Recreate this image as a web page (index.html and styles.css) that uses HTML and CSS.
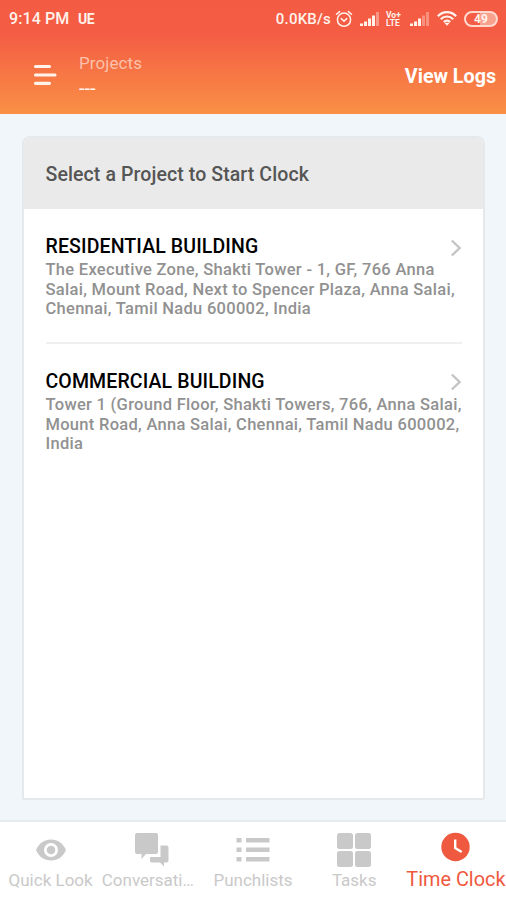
FILE: index.html
```html
<!DOCTYPE html>
<html lang="en">
<head>
    <meta charset="UTF-8">
    <meta name="viewport" content="width=device-width, initial-scale=1.0">
    <title>Time Clock</title>
    <link rel="stylesheet" href="styles.css">
</head>
<body>
    <div class="app">
        <header class="header">
            <!-- Status bar -->
            <div class="status">
                <span class="time">9:14 PM</span>
                <span class="carrier">UE</span>
                <span class="speed">0.0KB/s</span>
                <svg class="alarm" width="18" height="18" viewBox="0 0 18 18" fill="none" stroke="currentColor" stroke-width="1.5" stroke-linecap="round">
                    <circle cx="9" cy="9.7" r="6.6"/>
                    <path d="M1.5 4.3L4.6 1.6M16.5 4.3L13.4 1.6M6.3 8.6L9 11.2L11.7 8.6"/>
                </svg>
                <svg class="signal" width="20" height="14" viewBox="0 0 20 14" fill="currentColor">
                    <path d="M0 11.5h3V14H0zM4 9.5h3V14H4zM8 6.5h3V14H8zM12 3.5h3V14h-3z"/>
                    <path d="M16 0h3v14h-3z" opacity=".4"/>
                </svg>
                <span class="volte"><span>Vo+</span><span>LTE</span></span>
                <svg class="signal" width="20" height="14" viewBox="0 0 20 14" fill="currentColor">
                    <path d="M0 11.5h3V14H0zM4 9.5h3V14H4zM8 6.5h3V14H8z"/>
                    <path d="M12 3.5h3V14h-3zM16 0h3v14h-3z" opacity=".35"/>
                </svg>
                <svg class="wifi" width="20" height="15" viewBox="0 0 20 15" fill="none" stroke="currentColor" stroke-width="2.2">
                    <path d="M.8 5.3C6-.2 14-.2 19.2 5.3M3.8 8.2c3.5-3.6 8.9-3.6 12.4 0M6.8 11c1.8-1.9 4.6-1.9 6.4 0"/>
                    <path d="M7.3 11.8h5.4L10 14.8z" fill="currentColor" stroke="none"/>
                </svg>
                <span class="battery">49</span>
            </div>
            <!-- Toolbar -->
            <div class="toolbar">
                <svg class="menu" width="24" height="22" viewBox="0 0 24 22" stroke="currentColor" stroke-width="3.2" stroke-linecap="round">
                    <path d="M2.5 2.5h14M2.5 11H22M2.5 19.3h14"/>
                </svg>
                <div class="heading">
                    <div class="heading-label">Projects</div>
                    <div class="heading-value">---</div>
                </div>
                <a class="view-logs">View Logs</a>
            </div>
        </header>

        <main class="content">
            <section class="card">
                <h2 class="card-title">Select a Project to Start Clock</h2>
                <div class="project">
                    <div class="project-top">
                        <h3>RESIDENTIAL BUILDING</h3>
                        <svg class="chevron" width="12" height="18" viewBox="0 0 12 18" fill="none" stroke="currentColor" stroke-width="2.4">
                            <path d="M1.8 1.5L9.6 9L1.8 16.5"/>
                        </svg>
                    </div>
                    <p>The Executive Zone, Shakti Tower - 1, GF, 766 Anna<br>Salai, Mount Road, Next to Spencer Plaza, Anna Salai,<br>Chennai, Tamil Nadu 600002, India</p>
                </div>
                <div class="project">
                    <div class="project-top">
                        <h3>COMMERCIAL BUILDING</h3>
                        <svg class="chevron" width="12" height="18" viewBox="0 0 12 18" fill="none" stroke="currentColor" stroke-width="2.4">
                            <path d="M1.8 1.5L9.6 9L1.8 16.5"/>
                        </svg>
                    </div>
                    <p>Tower 1 (Ground Floor, Shakti Towers, 766, Anna Salai,<br>Mount Road, Anna Salai, Chennai, Tamil Nadu 600002,<br>India</p>
                </div>
            </section>
        </main>

        <!-- Bottom tabs -->
        <nav class="tabs">
            <a class="tab">
                <svg width="36" height="36" viewBox="0 0 36 36" fill="currentColor">
                    <path fill-rule="evenodd" d="M3 18C6 11 11.5 7.500 18 7.500S30 11 33 18C30 25 24.5 28.500 18 28.500S6 25 3 18zM18 11a7 7 0 1 0 0 14a7 7 0 0 0 0-14zM18 13.700a4.300 4.300 0 1 1 0 8.600a4.300 4.300 0 0 1 0-8.600z"/>
                </svg>
                <span>Quick Look</span>
            </a>
            <a class="tab">
                <svg width="36" height="36" viewBox="0 0 36 36" fill="currentColor">
                    <path d="M3 1h19q2 0 2 2v17q0 2-2 2H12l-4.500 5v-5H3q-2 0-2-2V3q0-2 2-2z"/>
                    <path d="M26.500 13.500h6q2 0 2 2v13q0 2-2 2h-2.500v4l-4-4h-8.500q-1.500 0-1.500-2v-3.500h10.500z"/>
                </svg>
                <span class="long-label">Conversati…</span>
            </a>
            <a class="tab">
                <svg width="36" height="36" viewBox="0 0 36 36" fill="currentColor">
                    <path d="M1.500 6h5v4.500h-5zM1.500 15.500h5V20h-5zM1.500 25h5v4.500h-5zM11 6h23.500v4.500H11zM11 15.500h23.500V20H11zM11 25h23.500v4.500H11z"/>
                </svg>
                <span>Punchlists</span>
            </a>
            <a class="tab">
                <svg width="36" height="36" viewBox="0 0 36 36" fill="currentColor">
                    <rect x="1" y="1" width="16" height="16" rx="2.5"/>
                    <rect x="19" y="1" width="16" height="16" rx="2.5"/>
                    <rect x="1" y="19" width="16" height="16" rx="2.5"/>
                    <rect x="19" y="19" width="16" height="16" rx="2.5"/>
                </svg>
                <span>Tasks</span>
            </a>
            <a class="tab active">
                <svg width="36" height="36" viewBox="0 0 36 36">
                    <circle cx="18.5" cy="15" r="14.2" fill="currentColor"/>
                    <path d="M18.2 7.5V16l6.5 4" fill="none" stroke="#fff" stroke-width="2.4"/>
                </svg>
                <span>Time Clock</span>
            </a>
        </nav>
    </div>
</body>
</html>
```
FILE: styles.css
```css
* {
    box-sizing: border-box;
}

body {
    margin: 0;
    font-family: Roboto, "Liberation Sans", sans-serif;
    background: #f0f6f9;
}

h2, h3, p {
    margin: 0;
}

svg {
    display: block;
    flex: none;
}

.app {
    display: flex;
    flex-direction: column;
    height: 900px;
    overflow: hidden;
}

/* Header */
.header {
    height: 114px;
    background: linear-gradient(#f45b43 0%, #f45d44 30%, #f99045 100%);
    color: #fff3ec;
}

.status {
    display: flex;
    align-items: center;
    height: 37px;
    padding: 0 8px 0 9px;
    font-weight: 500;
    white-space: nowrap;
}

.time {
    width: 69px;
    font-size: 16px;
    letter-spacing: 0.1px;
}

.carrier {
    font-size: 14px;
    font-weight: 700;
    letter-spacing: -0.5px;
}

.speed {
    margin-left: auto;
    font-size: 15px;
    letter-spacing: 0.2px;
}

.alarm {
    margin-left: 4px;
}

.signal {
    margin-left: 7px;
}

.volte {
    display: flex;
    flex-direction: column;
    width: 17px;
    margin-left: 6px;
    font-size: 8.5px;
    font-weight: 700;
    line-height: 8px;
}

.wifi {
    margin-left: 7px;
}

.battery {
    width: 34px;
    height: 16px;
    margin-left: 7px;
    border: 2px solid #ffd9ce;
    border-radius: 8px;
    background: linear-gradient(90deg, transparent 48%, #f9a18f 48%);
    font-size: 12px;
    font-weight: 700;
    line-height: 13px;
    text-align: center;
}

.toolbar {
    display: flex;
    height: 77px;
    padding: 0 10px 0 33px;
}

.menu {
    margin-top: 27px;
}

.heading {
    margin: 16px 0 0 22px;
    font-size: 17px;
    line-height: 21px;
}

.heading-label {
    color: #fcc0aa;
    letter-spacing: 0.1px;
}

.heading-value {
    margin-top: 4px;
    font-size: 20px;
}

.view-logs {
    margin: 28px 0 0 auto;
    color: #fff;
    font-size: 19.7px;
    font-weight: 700;
    line-height: 24px;
}

/* Project list */
.content {
    flex: none;
    padding: 22px 21px 20px 22px;
}

.card {
    height: 664px;
    border: 2px solid #e6e9eb;
    border-radius: 8px 8px 2px 2px;
    background: #fff;
}

.card-title {
    height: 71px;
    padding-left: 21.5px;
    border-radius: 6px 6px 0 0;
    background: #eaeaea;
    color: #555;
    font-size: 19.5px;
    font-weight: 500;
    letter-spacing: 0.1px;
    line-height: 73px;
}

.project {
    height: 135px;
    margin: 0 21px 0 21.5px;
    padding-top: 25px;
    border-bottom: 2px solid #f0f0f0;
    white-space: nowrap;
}

.project:last-child {
    border-bottom: 0;
}

.project-top {
    display: flex;
    justify-content: space-between;
    height: 26px;
}

.project h3 {
    color: #000;
    font-size: 19.5px;
    font-weight: 500;
    letter-spacing: 0.13px;
    line-height: 25px;
}

.chevron {
    margin-top: 5px;
    color: #c4c4c4;
}

.project:last-child .chevron {
    margin-top: 4px;
}

.project p {
    color: #919191;
    font-size: 16.5px;
    font-weight: 500;
    letter-spacing: 0.29px;
    line-height: 19.7px;
}

/* Bottom tabs */
.tabs {
    display: flex;
    height: 80px;
    border-top: 2px solid #e6ebee;
    background: #fff;
}

.tab {
    flex: 1 1 0;
    display: flex;
    flex-direction: column;
    align-items: center;
    min-width: 0;
    padding-top: 10px;
    color: #c9c9c9;
    font-size: 17px;
    line-height: 20px;
    white-space: nowrap;
}

.tab span {
    margin-top: 2px;
}

.tab .long-label {
    margin-right: 8px;
}

.tab.active {
    color: #ef5940;
    font-size: 19.9px;
}

.tab.active span {
    margin-left: 1px;
}
```
